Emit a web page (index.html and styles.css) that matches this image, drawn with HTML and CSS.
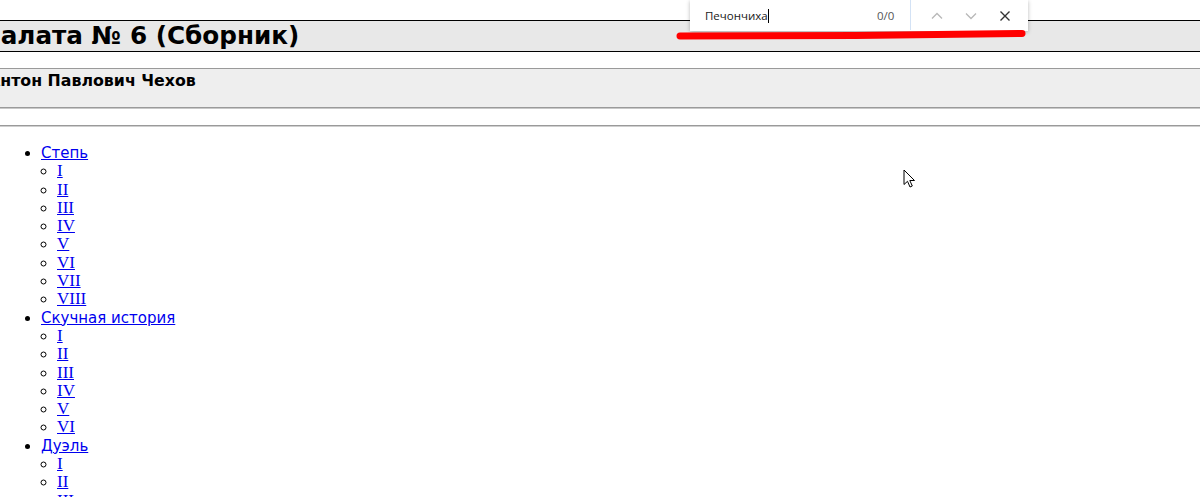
FILE: index.html
```html
<!DOCTYPE html>
<html lang="ru">
<head>
<meta charset="utf-8">
<title>Палата № 6 (Сборник)</title>
<link rel="stylesheet" href="styles.css">
</head>
<body>
<div class="page">
  <h1 class="title">Палата № 6 (Сборник)</h1>
  <div class="author">
    <h2 class="author-name">Антон Павлович Чехов</h2>
  </div>
  <div class="rule"></div>
  <ul class="toc">
    <li><a href="#" class="ttl">Степь</a>
      <ul class="sub">
        <li><a href="#">I</a></li>
        <li><a href="#">II</a></li>
        <li><a href="#">III</a></li>
        <li><a href="#">IV</a></li>
        <li><a href="#">V</a></li>
        <li><a href="#">VI</a></li>
        <li><a href="#">VII</a></li>
        <li><a href="#">VIII</a></li>
      </ul>
    </li>
    <li><a href="#" class="ttl">Скучная история</a>
      <ul class="sub">
        <li><a href="#">I</a></li>
        <li><a href="#">II</a></li>
        <li><a href="#">III</a></li>
        <li><a href="#">IV</a></li>
        <li><a href="#">V</a></li>
        <li><a href="#">VI</a></li>
      </ul>
    </li>
    <li><a href="#" class="ttl">Дуэль</a>
      <ul class="sub">
        <li><a href="#">I</a></li>
        <li><a href="#">II</a></li>
        <li><a href="#">III</a></li>
        <li><a href="#">IV</a></li>
      </ul>
    </li>
  </ul>
</div>

<div class="findbar">
  <div class="find-input">
    <span class="find-text">Печончиха</span><span class="caret"></span>
  </div>
  <span class="find-count">0/0</span>
  <span class="find-sep"></span>
  <div class="find-btns">
    <svg class="fb fb-dim" width="14" height="14" viewBox="0 0 14 14"><path d="M2 9.5 L7 4.5 L12 9.5" fill="none" stroke="currentColor" stroke-width="1.3"/></svg>
    <svg class="fb fb-dim" width="14" height="14" viewBox="0 0 14 14"><path d="M2 4.5 L7 9.5 L12 4.5" fill="none" stroke="currentColor" stroke-width="1.3"/></svg>
    <svg class="fb fb-close" width="14" height="14" viewBox="0 0 14 14"><path d="M2.5 2.5 L11.5 11.5 M11.5 2.5 L2.5 11.5" fill="none" stroke="currentColor" stroke-width="1.4"/></svg>
  </div>
</div>

<svg class="annot" width="360" height="12" viewBox="0 0 360 12"><path d="M4 7 L180 6.5 L346 4.5" fill="none" stroke="#ff0000" stroke-width="7" stroke-linecap="round"/></svg>

<svg class="pointer" width="14" height="20" viewBox="0 0 14 20"><path d="M1 1 L1 15.5 L4.5 12.3 L7 18 L9.3 17 L6.8 11.5 L11.5 11.5 Z" fill="#fff" stroke="#000" stroke-width="1" stroke-linejoin="round"/></svg>
</body>
</html>
```

FILE: styles.css
```css
html, body {
  margin: 0;
  padding: 0;
  background: #fff;
}
body {
  font-family: "Liberation Serif", "Times New Roman", serif;
  font-size: 16px;
  color: #000;
  overflow: hidden;
  height: 497px;
  position: relative;
}
.page {
  padding-top: 20px;
}
.title {
  margin: 0;
  border-top: 1px solid #000;
  border-bottom: 1px solid #000;
  background: #e8e8e8;
  font-family: "DejaVu Sans", Verdana, sans-serif;
  font-weight: bold;
  font-size: 24.7px;
  line-height: 30px;
  text-indent: -20px;
  white-space: nowrap;
}
.author {
  margin-top: 16px;
  border-top: 1px solid #9a9a9a;
  background: #eeeeee;
  height: 38px;
  border-bottom: 1px solid #9a9a9a;
  box-shadow: 0 1px 0 #c8c8c8;
}
.author-name {
  margin: 0;
  padding-top: 2px;
  font-family: "DejaVu Sans", Verdana, sans-serif;
  font-weight: bold;
  font-size: 15.8px;
  line-height: 19px;
  text-indent: -12px;
  white-space: nowrap;
}
.rule {
  margin-top: 17px;
  height: 0;
  border-top: 1px solid #9a9a9a;
  border-bottom: 1px solid #cfcfcf;
}
.toc {
  margin: 17px 0 0 0;
  padding-left: 41px;
  list-style: disc;
}
.toc li {
  line-height: 18.3px;
}
.sub {
  margin: 0;
  padding-left: 16px;
  list-style: circle;
}
.sub a {
  font-size: 17px;
}
a {
  color: #0000ee;
  text-decoration: underline;
}
.ttl {
  font-family: "DejaVu Sans", Verdana, sans-serif;
  font-size: 15px;
}

/* find bar overlay */
.findbar {
  position: absolute;
  left: 690px;
  top: 0;
  width: 338px;
  height: 31px;
  background: #fff;
  box-shadow: 0 1px 4px rgba(0,0,0,0.28);
  display: flex;
  align-items: center;
  font-family: "Open Sans", "Noto Sans", sans-serif;
  font-size: 11.5px;
}
.find-input {
  display: flex;
  align-items: center;
  padding-left: 15px;
  width: 157px;
}
.find-text {
  color: #202020;
}
.caret {
  display: inline-block;
  width: 1px;
  height: 14px;
  background: #000;
}
.find-count {
  color: #555;
  margin-left: 15px;
  width: 33px;
}
.find-sep {
  align-self: flex-start;
  width: 1px;
  height: 30px;
  background: #d3e2f5;
}
.find-btns {
  display: flex;
  align-items: center;
  gap: 20px;
  margin-left: 19px;
}
.fb {
  display: block;
}
.fb-dim {
  color: #b8b8b8;
}
.fb-close {
  color: #333;
}
.annot {
  position: absolute;
  left: 676px;
  top: 29px;
}
.pointer {
  position: absolute;
  left: 903px;
  top: 169px;
}
```
